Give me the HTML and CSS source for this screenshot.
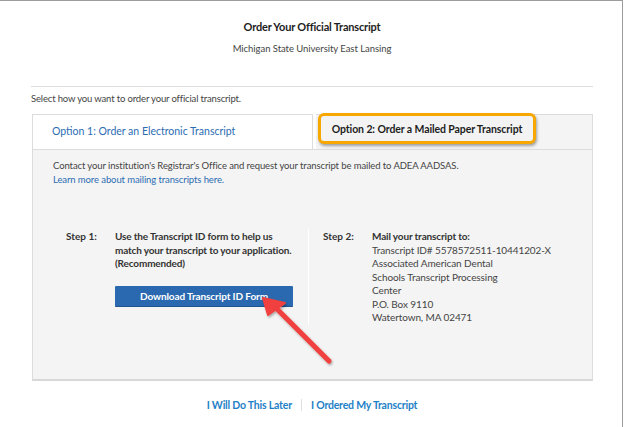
FILE: index.html
```html
<!DOCTYPE html>
<html>
<head>
<meta charset="utf-8">
<link rel="stylesheet" href="styles.css">
</head>
<body>
<div class="frame">
  <div class="page">
    <header class="head">
      <h1 class="title">Order Your Official Transcript</h1>
      <p class="school">Michigan State University East Lansing</p>
    </header>
    <p class="intro">Select how you want to order your official transcript.</p>
    <div class="tabs">
      <div class="tab tab-1">Option 1: Order an Electronic Transcript</div>
      <div class="tab tab-2">
        <span class="callout">Option 2: Order a Mailed Paper Transcript</span>
      </div>
    </div>
    <div class="panel">
      <p class="contact">Contact your institution's Registrar's Office and request your transcript be mailed to ADEA AADSAS.<br><a class="link" href="#">Learn more about mailing transcripts here.</a></p>
      <div class="steps">
        <div class="step step-1">
          <div class="step-label">Step 1:</div>
          <div class="step-body">
            <p class="step-text">Use the Transcript ID form to help us<br>match your transcript to your application.<br>(Recommended)</p>
            <button class="btn">Download Transcript ID Form</button>
          </div>
        </div>
        <div class="step step-2">
          <div class="step-label">Step 2:</div>
          <div class="step-body step-body-2">
            <p class="step-text">Mail your transcript to:</p>
            <p class="address">Transcript ID# 5578572511-10441202-X<br>Associated American Dental<br>Schools Transcript Processing<br>Center<br>P.O. Box 9110<br>Watertown, MA 02471</p>
          </div>
        </div>
      </div>
    </div>
    <nav class="footer">
      <a class="foot-link" href="#">I Will Do This Later</a>
      <span class="sep"></span>
      <a class="foot-link" href="#">I Ordered My Transcript</a>
    </nav>
  </div>
  <svg class="arrow" width="624" height="427" viewBox="0 0 624 427">
    <defs>
      <filter id="sh" x="-20%" y="-20%" width="140%" height="140%">
        <feDropShadow dx="1" dy="1.5" stdDeviation="1" flood-color="#000" flood-opacity="0.35"/>
      </filter>
    </defs>
    <g filter="url(#sh)" fill="#f0413f" stroke="#f0413f" stroke-linejoin="round" stroke-linecap="round">
      <line x1="329" y1="360" x2="276" y2="307" stroke-width="5"/>
      <polygon points="263,297 285,302 268,314" stroke-width="2"/>
    </g>
  </svg>
</div>
</body>
</html>
```

FILE: styles.css
```css
* { box-sizing: border-box; }
html, body { margin: 0; padding: 0; background: #fff; }
body { font-family: Lato, "Open Sans", Arial, sans-serif; color: #333; }
.frame {
  position: relative;
  width: 623px;
  height: 427px;
  border-top: 1px solid #9c9c9c;
  border-right: 1px solid #9c9c9c;
  overflow: hidden;
}
.page { margin-left: 31px; width: 562px; }
.head {
  text-align: center;
  border-bottom: 1px solid #dedede;
  padding-top: 19px;
  height: 86px;
}
.title { margin: 0; font-size: 11px; font-weight: 700; color: #1d1d1d; line-height: 14px; letter-spacing: -0.2px; }
.school { margin: 8px 0 0; font-size: 9.5px; color: #444; line-height: 14px; letter-spacing: -0.05px; }
.intro { margin: 5px 0 0; font-size: 9.5px; color: #444; line-height: 14px; letter-spacing: -0.15px; }
.tabs { display: flex; margin-top: 8px; margin-left: 1px; height: 35px; }
.tab { font-size: 10.5px; line-height: 35px; }
.tab-1 {
  width: 281px;
  background: #fff;
  border: 1px solid #dcdcdc;
  border-bottom: none;
  color: #2b6cb3;
  padding-left: 19px;
  line-height: 33px;
}
.tab-2 {
  flex: 1;
  margin-left: 3px;
  background: #f4f4f4;
  border-top: 1px solid #dcdcdc;
  border-right: 1px solid #dcdcdc;
  position: relative;
}
.callout {
  position: absolute;
  left: 2px;
  top: -2px;
  width: 218px;
  height: 31px;
  border: 3px solid #f7a800;
  border-radius: 6px;
  background: #f3f3f3;
  box-shadow: 1px 2px 3px rgba(0,0,0,0.35);
  color: #1d1d1d;
  font-weight: 700;
  line-height: 24px;
  padding-top: 1px;
  text-align: center;
  letter-spacing: -0.1px;
}
.panel {
  margin-left: 1px;
  height: 232px;
  background: #f4f4f4;
  border: 1px solid #dcdcdc;
  border-bottom: 2px solid #d8d8d8;
  padding: 9px 20px 0;
}
.contact { margin: 0; font-size: 9.5px; line-height: 14px; color: #444; letter-spacing: -0.1px; }
.link { color: #2b6cb3; text-decoration: none; }
.steps { display: flex; margin-top: 42px; padding-left: 13px; }
.step { display: flex; flex-shrink: 0; }
.step-1 { width: 242px; }
.step-2 { border-left: 1px solid #fff; padding-left: 14px; }
.step-label { width: 49px; flex-shrink: 0; font-size: 10px; font-weight: 700; color: #333; line-height: 13.5px; padding-top: 1px; }
.step-body { width: 185px; }
.step-body-2 { width: 190px; }
.step-text { margin: 0; font-size: 10px; font-weight: 700; color: #333; line-height: 13.5px; padding-top: 1px; letter-spacing: -0.15px; white-space: nowrap; }
.address { margin: 0; font-size: 10px; color: #444; line-height: 13.6px; letter-spacing: -0.1px; white-space: nowrap; }
.btn {
  display: block;
  margin-top: 15px;
  width: 178px;
  height: 21px;
  background: #2a69af;
  border: none;
  border-bottom: 1px solid #1f558f;
  border-radius: 1px;
  color: #fff;
  font-family: inherit;
  font-size: 10px;
  font-weight: 700;
  padding: 0;
  letter-spacing: -0.1px;
}
.footer {
  display: flex;
  justify-content: center;
  align-items: center;
  margin-top: 17px;
  gap: 9px;
}
.foot-link { color: #1e80c6; font-size: 10.5px; font-weight: 700; text-decoration: none; line-height: 14px; letter-spacing: -0.2px; }
.sep { width: 1px; height: 12px; background: #e0e0e0; }
.arrow { position: absolute; left: 0; top: 0; pointer-events: none; }
```
